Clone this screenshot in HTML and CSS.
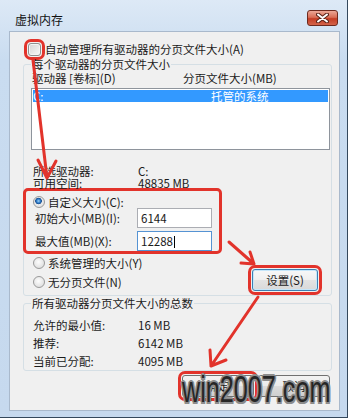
FILE: index.html
```html
<!DOCTYPE html>
<html lang="zh-CN">
<head>
    <meta charset="UTF-8">
    <title>虚拟内存</title>
    <link rel="stylesheet" href="styles.css">
</head>
<body>
    <div class="window">
        <div class="titlebar">
            <span class="title">虚拟内存</span>
            <span class="close-btn">
                <svg width="13" height="10" viewBox="0 0 13 10">
                    <path d="M2 1.5 L11 8.5 M11 1.5 L2 8.5" stroke="#5a2318" stroke-width="4" stroke-linecap="round"/>
                    <path d="M2 1.5 L11 8.5 M11 1.5 L2 8.5" stroke="#fff" stroke-width="2" stroke-linecap="round"/>
                </svg>
            </span>
        </div>

        <div class="client">
            <div class="auto-row">
                <span class="checkbox mark"></span>
                <span>自动管理所有驱动器的分页文件大小(A)</span>
            </div>

            <fieldset class="group">
                <legend>每个驱动器的分页文件大小</legend>
                <div class="list-head">
                    <span class="col-drive">驱动器 [卷标](D)</span>
                    <span>分页文件大小(MB)</span>
                </div>
                <div class="listbox">
                    <div class="list-row">
                        <span class="col-drive">C:</span>
                        <span>托管的系统</span>
                    </div>
                </div>

                <div class="info">
                    <div class="kv"><span class="k">所选驱动器:</span><span>C:</span></div>
                    <div class="kv"><span class="k">可用空间:</span><span>48835 MB</span></div>
                </div>

                <div class="custom">
                    <div class="radio-row"><span class="radio checked"></span>自定义大小(C):</div>
                    <div class="field-row">
                        <span class="field-label">初始大小(MB)(I):</span>
                        <div class="textbox">6144</div>
                    </div>
                    <div class="field-row">
                        <span class="field-label">最大值(MB)(X):</span>
                        <div class="textbox focused">12288<i class="caret"></i></div>
                    </div>
                </div>

                <div class="radio-row sys-radio"><span class="radio"></span>系统管理的大小(Y)</div>
                <div class="last-row">
                    <div class="radio-row"><span class="radio"></span>无分页文件(N)</div>
                    <button class="btn btn-set mark">设置(S)</button>
                </div>
            </fieldset>

            <fieldset class="group group-total">
                <legend>所有驱动器分页文件大小的总数</legend>
                <div class="kv tall"><span class="k">允许的最小值:</span><span>16 MB</span></div>
                <div class="kv tall"><span class="k">推荐:</span><span>6142 MB</span></div>
                <div class="kv tall"><span class="k">当前已分配:</span><span>4095 MB</span></div>
            </fieldset>

            <div class="buttons">
                <button class="btn mark">确定</button>
                <button class="btn">取消</button>
            </div>
        </div>

        <svg class="arrows" width="348" height="418" viewBox="0 0 348 418">
            <g fill="none" stroke="#e2332b" stroke-width="3" stroke-linecap="round" stroke-linejoin="round">
                <path d="M33 60 L47 178 M38 160 L47 178 L56 161"/>
                <path d="M229 242 L254 264 M250 252 L254 264 L241 263"/>
                <path d="M258 297 L211 366 M226 360 L211 366 L210 350"/>
            </g>
        </svg>

        <div class="watermark">win2007.com</div>
    </div>
</body>
</html>
```

FILE: styles.css
```css
* {
    box-sizing: border-box;
}
body {
    margin: 0;
    width: 350px;
    height: 420px;
    overflow: hidden;
    background: #fff;
    font-family: "Noto Sans CJK SC", "Noto Sans", sans-serif;
    font-size: 11.5px;
    color: #1b1b1b;
}
.window {
    position: relative;
    width: 348px;
    height: 418px;
    background: linear-gradient(#dde9f6, #c9dcf0 60px, #c6d9ee);
    border-right: 1px solid #34485c;
    border-bottom: 1px solid #34485c;
}
.titlebar {
    display: flex;
    justify-content: space-between;
    align-items: flex-start;
    height: 31px;
    padding: 10px 9px 0 15px;
}
.title {
    margin-top: 3px;
    font-size: 12px;
    line-height: 14px;
    color: #111;
}
.close-btn {
    display: flex;
    align-items: center;
    justify-content: center;
    width: 31px;
    height: 16px;
    border: 1px solid #6e2a1e;
    border-radius: 3px;
    background: linear-gradient(#eba796, #d96e56 45%, #c43d24 55%, #d4644a);
}
.client {
    margin-left: 9px;
    width: 331px;
    height: 380px;
    padding-top: 9px;
    background: #f0f0f0;
    border: 1px solid #a9b9cc;
}
.auto-row {
    display: flex;
    align-items: center;
    gap: 4px;
    height: 16px;
    line-height: 16px;
    margin-left: 18px;
}
.checkbox {
    width: 13px;
    height: 13px;
    border: 1px solid #8f8f8f;
    background: linear-gradient(135deg, #d4d4d4, #f8f8f8);
    box-shadow: inset 0 0 0 1px #f4f4f4;
}
.mark {
    outline: 3px solid #e2332b;
    outline-offset: 1px;
    border-radius: 3px;
}
.group {
    min-width: 0;
    margin: 0 7px 0 13px;
    padding: 0 1px 4px 7px;
    border: 1px solid #d5dfe5;
    border-radius: 3px;
}
.group legend {
    padding: 0 1px;
    line-height: 14px;
}
.list-head {
    display: flex;
    height: 14px;
    line-height: 14px;
    padding-left: 1px;
}
.col-drive {
    width: 151px;
}
.listbox {
    margin-top: 3px;
    height: 62px;
    padding: 1px;
    border: 1px solid #8e949c;
    background: #fff;
}
.list-row {
    display: flex;
    height: 12px;
    line-height: 12px;
    background: #3399ff;
    color: #fff;
}
.list-row .col-drive {
    width: 178px;
}
.info {
    margin-top: 15px;
}
.kv {
    display: flex;
    height: 12px;
    line-height: 12px;
    padding-left: 2px;
}
.kv .k {
    width: 105px;
}
.group-total {
    padding-top: 6px;
    padding-bottom: 0;
}
.kv.tall {
    height: 18px;
    line-height: 18px;
}
.custom {
    width: 199px;
    margin: -1px 0 0 -8px;
    padding: 5px 7px 0 5px;
    border: 3px solid #e2332b;
    border-radius: 5px;
}
.radio-row {
    display: flex;
    align-items: center;
    height: 12px;
    line-height: 12px;
    padding-left: 2px;
}
.radio {
    width: 12px;
    height: 12px;
    margin-right: 3px;
    border: 1px solid #9a9a9a;
    border-radius: 50%;
    background: radial-gradient(circle at 45% 40%, #fdfdfd, #e2e2e2 70%, #d2d2d2);
}
.radio.checked {
    background:
        radial-gradient(circle at 45% 40%, #9fd2f6 0, #2a78c6 2px, #174d8e 3px, rgba(0,0,0,0) 3.6px),
        radial-gradient(circle at 45% 40%, #fdfdfd, #e2e2e2 70%, #d2d2d2);
}
.field-row {
    display: flex;
    align-items: center;
    height: 20px;
}
.field-row + .field-row {
    margin-top: 3px;
}
.field-label {
    width: 106px;
    padding-left: 4px;
}
.textbox {
    width: 75px;
    height: 20px;
    padding-left: 3px;
    line-height: 18px;
    border: 1px solid #abadb3;
    background: #fff;
}
.textbox.focused {
    border-color: #5593d3;
}
.caret {
    display: inline-block;
    width: 1px;
    height: 12px;
    margin-left: 1px;
    vertical-align: -2px;
    background: #000;
}
.sys-radio {
    margin-top: 3px;
}
.last-row {
    display: flex;
    justify-content: space-between;
    align-items: center;
    height: 22px;
}
.last-row .radio-row {
    margin-top: 4px;
}
.btn {
    height: 22px;
    padding: 0;
    font: inherit;
    color: #1b1b1b;
    border: 1px solid #707070;
    border-radius: 3px;
    background: linear-gradient(#f2f2f2, #ebebeb 49%, #dddddd 50%, #cfcfcf);
}
.btn-set {
    width: 66px;
    margin-right: 12px;
    border-color: #3c7fb1;
    box-shadow: inset 0 0 0 1px #c5e6fa;
    background: linear-gradient(#f7f7f7, #efefef 49%, #e3e3e3 50%, #d9d9d9);
}
.buttons {
    display: flex;
    justify-content: flex-end;
    gap: 4px;
    margin-top: 4px;
    padding-right: 9px;
}
.buttons .btn {
    width: 72px;
}
.arrows {
    position: absolute;
    left: 0;
    top: 0;
    pointer-events: none;
}
.watermark {
    position: absolute;
    left: 182px;
    top: 372px;
    font: 36px/36px "Liberation Sans", sans-serif;
    color: #262626;
    transform: scaleX(0.7);
    transform-origin: left top;
    text-shadow:
        -2px 0 #8c8c8c, 2px 0 #8c8c8c, 0 -2px #8c8c8c, 0 2px #8c8c8c,
        -1.5px -1.5px #8c8c8c, 1.5px -1.5px #8c8c8c,
        -1.5px 1.5px #8c8c8c, 1.5px 1.5px #8c8c8c;
}
```
